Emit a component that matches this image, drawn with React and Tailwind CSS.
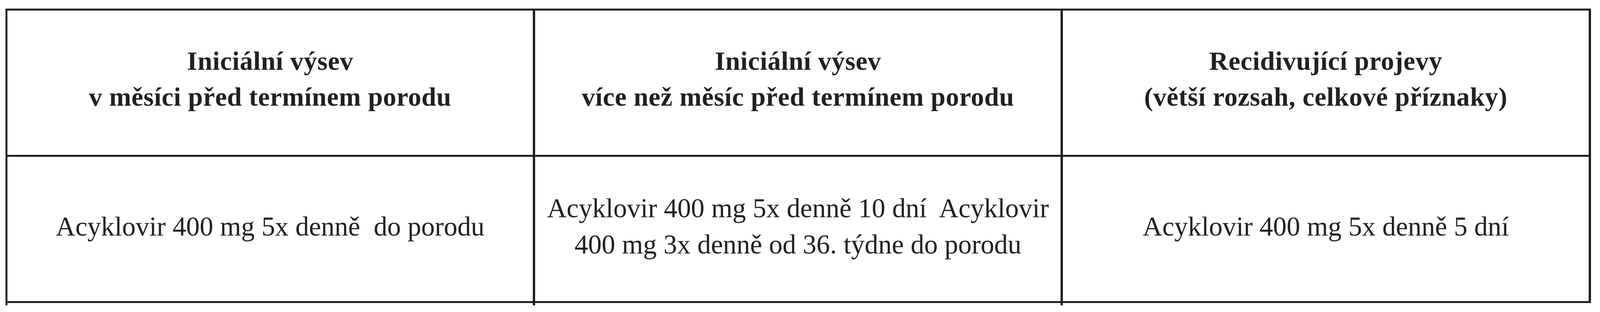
import React from "react";

const headers = [
  ["Iniciální výsev", "v měsíci před termínem porodu"],
  ["Iniciální výsev", "více než měsíc před termínem porodu"],
  ["Recidivující projevy", "(větší rozsah, celkové příznaky)"],
];

const body = [
  ["Acyklovir 400 mg 5x denně  do porodu"],
  ["Acyklovir 400 mg 5x denně 10 dní  Acyklovir", "400 mg 3x denně od 36. týdne do porodu"],
  ["Acyklovir 400 mg 5x denně 5 dní"],
];

const cols = [
  "flex-1 min-w-0 border-l-[5px]",
  "flex-1 min-w-0 border-l-[6px]",
  "flex-1 min-w-0 border-l-[6px] border-r-[6px]",
];
const ticks = [
  "flex-1 min-w-0 border-l-[5px]",
  "flex-1 min-w-0 border-l-[6px]",
  "flex-1 min-w-0 border-l-[6px] border-r-[6px] border-r-transparent",
];

export default function App() {
  return (
    <div
      className="w-full h-[800px] bg-white pt-[22px] pl-[0.34%] pr-[0.57%] text-[#231f20]"
      style={{ fontFamily: '"Liberation Serif", "Times New Roman", serif' }}
    >
      <div className="w-full border-t-[5px] border-[#231f20]">
        <div className="flex border-b-[5px] border-[#231f20]">
          {headers.map((lines, i) => (
            <div
              key={i}
              className={`${cols[i]} border-[#231f20] h-[370px] flex flex-col items-center justify-center pb-[18px] text-center font-bold text-[1.653vw] leading-[92px] tracking-[0.01em]`}
            >
              {lines.map((l, j) => (
                <div key={j} className="whitespace-pre">{l}</div>
              ))}
            </div>
          ))}
        </div>
        <div className="flex border-b-[5px] border-[#231f20]">
          {body.map((lines, i) => (
            <div
              key={i}
              className={`${cols[i]} border-[#231f20] h-[370px] flex flex-col items-center justify-center pb-[14px] text-center text-[1.696vw] leading-[93px]`}
            >
              {lines.map((l, j) => (
                <div key={j} className="whitespace-pre">{l}</div>
              ))}
            </div>
          ))}
        </div>
        <div className="flex h-[6px]">
          {ticks.map((c, i) => (
            <div key={i} className={`${c} border-l-[#231f20] h-full`} />
          ))}
        </div>
      </div>
    </div>
  );
}
